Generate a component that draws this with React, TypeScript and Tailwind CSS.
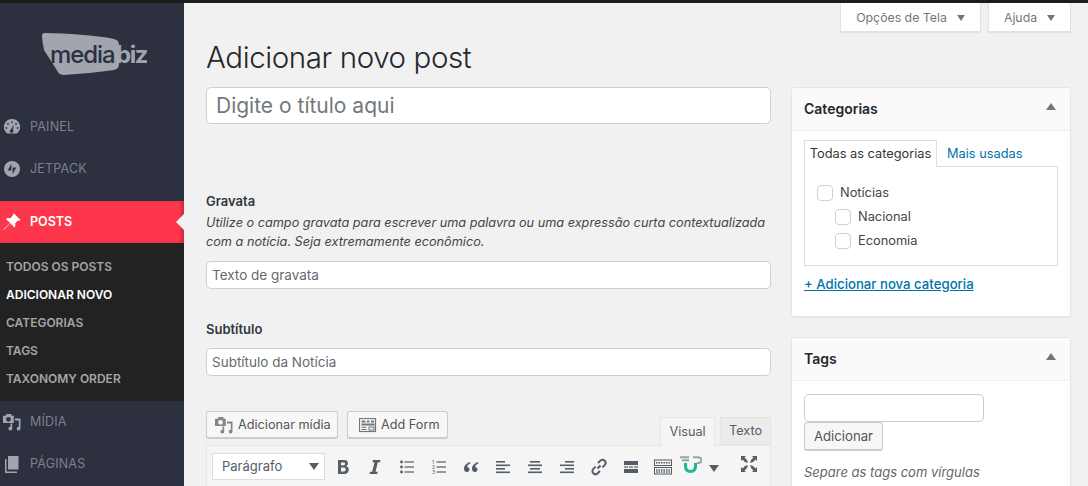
const side = "fill-[#a0a5ae]";

function Caret({ className = "", w = 10, h = 7 }: { className?: string; w?: number; h?: number }) {
  return <svg width={w} height={h} viewBox="0 0 10 7" preserveAspectRatio="none" className={className}><path d="M0 0h10L5 7z" fill="currentColor" /></svg>;
}

function Logo() {
  return (
    <svg width="106" height="42" viewBox="0 0 106 42" className="block">
      <path d="M1 2C1 .5 3 0 5 0c20 .5 50 2 68 6 4 1 5 3 5 6v19c0 3-1 5-5 6-14 2-35 4-50 5-3 0-5-1-6-3L3 17C2 12 1 6 1 2z" fill="#a0a5ae" />
      <text x="9" y="30" fontFamily="Inter, sans-serif" fontSize="24" fontWeight="500" letterSpacing="-1.1" fill="#2c303f">media</text>
      <text x="75" y="30" fontFamily="Inter, sans-serif" fontSize="24" fontWeight="700" letterSpacing="-1.5" fill="#a0a5ae">biz</text>
    </svg>
  );
}

function Gauge() {
  return (
    <svg width="16" height="16" viewBox="0 0 16 16">
      <path fillRule="evenodd" className={side} d="M8 0a8 8 0 0 1 7 12c-.6 1-1.500 2.400-2.500 2.400h-9C2.500 14.400 1.600 13 1 12A8 8 0 0 1 8 0zM8 2.200a.9.9 0 1 0 0 1.800.9.9 0 0 0 0-1.800zM4 4a.9.9 0 1 0 0 1.800A.9.9 0 0 0 4 4zm8 0a.9.9 0 1 0 0 1.800A.9.9 0 0 0 12 4zM2.500 8a.9.9 0 1 0 0 1.800.9.9 0 0 0 0-1.800zm11 0a.9.9 0 1 0 0 1.800.9.9 0 0 0 0-1.800zM9.900 5.500 7 10.500a1.700 1.700 0 1 0 2 .6z" />
    </svg>
  );
}

function Jetpack() {
  return (
    <svg width="16" height="16" viewBox="0 0 16 16">
      <path fillRule="evenodd" className={side} d="M8 0a8 8 0 1 1 0 16A8 8 0 0 1 8 0zM7.400 2.800 3.700 9.600h3.700zM8.600 6.400v6.800l3.700-6.800z" />
    </svg>
  );
}

function Pin() {
  return (
    <svg width="18" height="18" viewBox="0 0 18 18">
      <path fill="#fff" d="M11 .5 17.500 7c-.7.7-1.700.8-2.500.4l-3 3c.6 1.500.4 3-.6 4L7.300 10.300 1 17l-.5-.5 6.600-6.400L3 6c1-1 2.600-1.200 4-.6l3-3c-.3-.6-.2-1.300 1-1.900z" />
    </svg>
  );
}

function Media({ color = "#a0a5ae" }: { color?: string }) {
  return (
    <svg width="18" height="18" viewBox="0 0 18 18">
      <path fillRule="evenodd" fill={color} d="M3.500 1h4.500l.8 1.700h2V10H0V2.700h2.700zM5.500 3.900a2.400 2.400 0 1 0 0 4.800 2.400 2.400 0 0 0 0-4.800z" />
      <path fill={color} d="M12 5.500h5.500v10a1.900 1.900 0 1 1-1.700-1.800V7.500H12zM9.200 10.500v5a1.900 1.900 0 1 1-1.700-1.800v-3.200z" />
    </svg>
  );
}

function Pages() {
  return (
    <svg width="14" height="17" viewBox="0 0 14 17">
      <path fill="#a0a5ae" d="M3 0h10.500v13.500H3zM0 3h1.500v12.500H12V17H0z" />
    </svg>
  );
}

function MenuItem({ icon, label }: { icon: React.ReactNode; label: string }) {
  return (
    <div className="flex h-[42px] items-center">
      <div className="flex w-[30px] shrink-0 justify-center pr-[6px]">{icon}</div>
      <span className="text-[12.500px] tracking-[0.2px] text-[#7c808e]">{label}</span>
    </div>
  );
}

function SubItem({ label, active }: { label: string; active?: boolean }) {
  return (
    <div className={`flex h-7 items-center pl-[6px] text-[12px] font-semibold ${active ? "text-white" : "text-[#a3a5a8]"}`}>
      {label}
    </div>
  );
}

function Sidebar() {
  return (
    <aside className="w-[184px] shrink-0 bg-[#2c303f]">
      <div className="flex h-[103px] items-start pl-[41px] pt-[30px]"><Logo /></div>
      <MenuItem icon={<Gauge />} label="PAINEL" />
      <MenuItem icon={<Jetpack />} label="JETPACK" />
      <div className="h-[11px]" />
      <div className="relative flex h-[42px] items-center bg-[#fd364b] shadow-[inset_-3px_0_3px_rgba(0,0,0,0.18)]">
        <div className="flex w-[30px] shrink-0 justify-center pr-[6px]"><Pin /></div>
        <span className="text-[12.500px] font-semibold text-white">POSTS</span>
        <div className="absolute right-0 top-[13px] h-0 w-0 border-y-[8px] border-r-[8px] border-y-transparent border-r-[#f1f1f1]" />
      </div>
      <div className="h-[158px] bg-[#222222] pt-[10px]">
        <SubItem label="TODOS OS POSTS" />
        <SubItem label="ADICIONAR NOVO" active />
        <SubItem label="CATEGORIAS" />
        <SubItem label="TAGS" />
        <SubItem label="TAXONOMY ORDER" />
      </div>
      <MenuItem icon={<Media />} label="MÍDIA" />
      <MenuItem icon={<Pages />} label="PÁGINAS" />
    </aside>
  );
}

function Field({ text }: { text: string }) {
  return (
    <div className="flex h-7 items-center rounded-[5px] border border-[#cfcfcf] bg-white pl-[5px] text-[13.500px] text-[#666a70]">{text}</div>
  );
}

function Ico({ children, w = 16 }: { children: React.ReactNode; w?: number }) {
  return <svg width={w} height="16" viewBox={`0 0 ${w} 16`} fill="#555d66">{children}</svg>;
}

function Lines({ kind }: { kind: "left" | "center" | "right" }) {
  const rows = {
    left: [[1, 9], [1, 14], [1, 9], [1, 14]],
    center: [[3, 10], [1, 14], [3, 10], [1, 14]],
    right: [[6, 9], [1, 14], [6, 9], [1, 14]],
  }[kind];
  return <Ico>{rows.map(([x, w], i) => <rect key={i} x={x} y={2 + i * 3.500} width={w} height="1.600" />)}</Ico>;
}

function Toolbar() {
  const btn = "mt-[2px] flex h-6 w-8 shrink-0 items-center justify-center";
  return (
    <div className="flex h-[41px] items-start rounded-none border-x border-t border-[#e5e5e5] bg-[#f5f5f5] pl-[5px] pt-[7px]">
      <div className="mr-[2px] flex h-[27px] w-[113px] shrink-0 items-center justify-between border border-[#dddddd] bg-white pl-[9px] pr-[5px] text-[13px] text-[#555d66]">
        Parágrafo <Caret className="text-[#555d66]" />
      </div>
      <div className={btn}><Ico><path d="M3 1h6c2.500 0 4 1.200 4 3.300 0 1.400-.8 2.500-2 2.900 1.700.3 2.800 1.500 2.800 3.300C13.800 13 12 15 9.300 15H3zm3 2.400v2.900h2.400c1.100 0 1.700-.6 1.700-1.500s-.6-1.400-1.700-1.400zm0 5.100v4h2.800c1.200 0 1.900-.8 1.900-2s-.7-2-1.900-2z" /></Ico></div>
      <div className={btn}><Ico><path d="M6 1h7.500l-.5 2.200h-2.200L8.500 12.800h2.200L10.200 15H2.500l.5-2.200h2.200L7.500 3.200H5.500z" /></Ico></div>
      <div className={btn}><Ico><circle cx="2.500" cy="3" r="1.400" /><circle cx="2.500" cy="8" r="1.400" /><circle cx="2.500" cy="13" r="1.400" /><rect x="5.500" y="2.400" width="9.500" height="1.200" /><rect x="5.500" y="7.400" width="9.500" height="1.200" /><rect x="5.500" y="12.400" width="9.500" height="1.200" /></Ico></div>
      <div className={btn}><Ico><rect x="5.500" y="2.400" width="9.500" height="1.200" /><rect x="5.500" y="7.400" width="9.500" height="1.200" /><rect x="5.500" y="12.400" width="9.500" height="1.200" /><text x="1" y="5" fontSize="5" fontFamily="Inter, sans-serif">1</text><text x="1" y="10" fontSize="5" fontFamily="Inter, sans-serif">2</text><text x="1" y="15" fontSize="5" fontFamily="Inter, sans-serif">3</text></Ico></div>
      <div className={btn}><Ico><path d="M6.800 3C3.500 4.400 1 6.500 1 9.800 1 12 2.300 13 3.800 13c1.500 0 2.700-1.100 2.700-2.600 0-1.400-1-2.400-2.400-2.400.2-1.500 1.400-2.700 3.300-3.700zM14.800 3c-3.300 1.400-5.800 3.500-5.800 6.800C9 12 10.300 13 11.800 13c1.500 0 2.700-1.100 2.700-2.600 0-1.400-1-2.400-2.400-2.400.2-1.500 1.400-2.700 3.300-3.700z" /></Ico></div>
      <div className={btn}><Lines kind="left" /></div>
      <div className={btn}><Lines kind="center" /></div>
      <div className={btn}><Lines kind="right" /></div>
      <div className={btn}>
        <svg width="18" height="18" viewBox="0 0 18 18" fill="none" stroke="#555d66" strokeWidth="2"><path d="M7.500 10.500 10.500 7.500M8 5l2-2c1.500-1.500 3.500-1.500 4.700-.3s1.200 3.200-.3 4.700l-2 2M10 13l-2 2c-1.500 1.500-3.500 1.500-4.700.3S2.100 12.100 3.600 10.600l2-2" /></svg>
      </div>
      <div className={btn}><Ico><rect x="1" y="2" width="14" height="4" /><rect x="1" y="7.400" width="4" height="1.200" /><rect x="6" y="7.400" width="4" height="1.200" /><rect x="11" y="7.400" width="4" height="1.200" /><rect x="1" y="10" width="14" height="4" /></Ico></div>
      <div className={btn}>
        <svg width="18" height="16" viewBox="0 0 18 16" fill="none" stroke="#555d66"><rect x=".5" y="1" width="17" height="5.500" /><rect x=".5" y="8.500" width="17" height="6.500" /><path d="M2 3.700h14M2 11h14M2 13h14" strokeDasharray="1.500 1" strokeWidth="1.400" /></svg>
      </div>
      <div className="mt-[3px] flex h-6 w-[24px] shrink-0 items-start justify-center">
        <svg width="22" height="17" viewBox="0 0 22 17" fill="none">
          <path d="M0 1.200h9M2 4.200h7M13 1.200h5c2.500 0 3.500 1.300 3.500 2.800S20.500 7 18.500 7H17" stroke="#9ea1a5" strokeWidth="2" />
          <path d="M5.500 7v3c0 3.500 2 5.500 5 5.500s5-2 5-5.500V7" stroke="#1bb89a" strokeWidth="3" />
        </svg>
      </div>
      <div className="mt-[3px] flex h-6 w-[22px] shrink-0 items-center justify-center"><Caret className="text-[#555d66]" /></div>
      <div className="mt-[2px] flex h-[18px] w-[48px] shrink-0 items-center justify-center">
        <Ico><path d="M0 0h5L3.500 1.500 6 4 7 7 4 6 1.500 3.500 0 5zM16 0v5l-1.500-1.500L12 6 9 7l1-3 2.500-2.500L11 0zM0 16v-5l1.500 1.500L4 10l3-1-1 3-2.500 2.500L5 16zM16 16h-5l1.500-1.500L10 12 9 9l3 1 2.500 2.500L16 11z" /></Ico>
      </div>
    </div>
  );
}

function Editor() {
  return (
    <div className="mt-[35px]">
      <div className="flex h-[34px] items-start">
        <button className="flex h-7 w-[132px] items-center gap-[5px] rounded-[3px] border border-[#cccccc] border-b-[2px] bg-[#f7f7f7] pl-[8px] pt-[1px] text-[12.700px] text-[#555555]">
          <Media color="#82878c" /> Adicionar mídia
        </button>
        <button className="ml-[9px] flex h-7 w-[101px] items-center gap-[4px] rounded-[3px] border border-[#cccccc] border-b-[2px] bg-[#f7f7f7] pl-[11px] pt-[1px] text-[12.700px] text-[#555555]">
          <svg width="18" height="15" viewBox="0 0 18 15" fill="none" stroke="#72777c"><rect x=".5" y=".5" width="16" height="13" strokeWidth="1.200" /><path d="M2.500 3.500h4M8 3.500h2.500M12 3.500h3M2.500 6.500h13" strokeWidth="2" /><path d="M2.500 9.300h5M2.500 11.500h5" /><rect x="10" y="9" width="5" height="3" /></svg>
          Add Form
        </button>
        <div className="ml-auto mt-[6px] flex">
          <div className="z-10 flex h-[29px] w-[55px] items-center justify-center border border-b-0 border-[#e5e5e5] bg-[#f5f5f5] text-[12.700px] text-[#555d66]">Visual</div>
          <div className="ml-[5px] flex h-7 w-[51px] items-center justify-center border border-[#e5e5e5] bg-[#ebebeb] text-[12.700px] text-[#555d66]">Texto</div>
        </div>
      </div>
      <Toolbar />
    </div>
  );
}

function Box({ title, children, h }: { title: string; children: React.ReactNode; h: string }) {
  return (
    <section className={`rounded-[3px] border border-[#e5e5e5] bg-white shadow-[0_1px_1px_rgba(0,0,0,0.04)] ${h}`}>
      <div className="flex h-[43px] items-center justify-between border-b border-[#eeeeee] bg-[#fafafa] pl-[12px] pr-[14px]">
        <h2 className="mb-[2px] text-[14px] font-semibold text-[#23282d]">{title}</h2>
        <Caret className="mb-[5px] rotate-180 text-[#72777c]" />
      </div>
      {children}
    </section>
  );
}

function Check({ label, nested }: { label: string; nested?: boolean }) {
  return (
    <div className={`flex h-6 items-center text-[12.800px] text-[#444444] ${nested ? "pl-[30px]" : "pl-[12px]"}`}>
      <span className="mr-[7px] h-[16px] w-[16px] rounded-[4px] border border-[#d0d0d0] bg-white" />
      {label}
    </div>
  );
}

function Categories() {
  return (
    <Box title="Categorias" h="h-[230px]">
      <div className="px-[12px] pt-[9px]">
        <div className="flex h-[27px]">
          <div className="z-10 flex h-[27px] w-[133px] items-center justify-center border border-b-0 border-[#dddddd] bg-white text-[12.800px] text-[#32373c]">Todas as categorias</div>
          <div className="flex items-center pl-[10px] text-[12.800px] text-[#0073aa]">Mais usadas</div>
        </div>
        <div className="-mt-px h-[100px] w-[254px] border border-[#dddddd] pt-[14px]">
          <Check label="Notícias" />
          <Check label="Nacional" nested />
          <Check label="Economia" nested />
        </div>
        <div className="mt-[9px] text-[13.200px] font-medium text-[#0073aa] underline">+ Adicionar nova categoria</div>
      </div>
    </Box>
  );
}

function Tags() {
  return (
    <Box title="Tags" h="h-[200px]">
      <div className="px-[12px] pt-[13px]">
        <div className="h-7 w-[180px] rounded-[5px] border border-[#cccccc] bg-white" />
        <button className="flex h-[29px] w-[79px] items-center justify-center rounded-[3px] border border-[#cccccc] border-b-[2px] bg-[#f7f7f7] pt-[1px] text-[13.200px] text-[#555555]">Adicionar</button>
        <p className="mt-[12px] text-[13px] italic text-[#666666]">Separe as tags com vírgulas</p>
      </div>
    </Box>
  );
}

export default function App() {
  const top = "flex h-[29px] items-center justify-center gap-[10px] border border-t-0 border-[#e1e1e1] bg-white pt-[3px] text-[12.300px] text-[#72777c] shadow-[0_1px_1px_rgba(0,0,0,0.06)]";
  return (
    <div className="h-[486px] w-[1088px] overflow-hidden bg-[#f1f1f1] font-['Inter',sans-serif]">
      <div className="h-[3px] bg-[#1c1c1c]" />
      <div className="flex h-[483px]">
        <Sidebar />
        <main className="relative min-w-0 flex-1 pl-[22px] pr-[17px]">
          <div className="absolute right-[17px] top-0 flex gap-[7px]">
            <div className={`${top} w-[141px]`}>Opções de Tela <Caret w={8} h={6} className="mb-[2px]" /></div>
            <div className={`${top} w-[83px]`}>Ajuda <Caret w={8} h={6} className="mb-[2px]" /></div>
          </div>
          <div className="flex h-full gap-[20px]">
            <div className="w-[565px] shrink-0">
              <h1 className="h-[84px] pt-[34px] text-[29.500px] font-light leading-[40px] tracking-[-0.4px] text-[#23282d]">Adicionar novo post</h1>
              <div className="flex h-[37px] items-center rounded-[5px] border border-[#cfcfcf] bg-white pl-[9px] text-[21px] text-[#72777c]">Digite o título aqui</div>
              <h3 className="mt-[67px] text-[13px] font-semibold leading-[20px] text-[#32373c]">Gravata</h3>
              <p className="mt-[2px] whitespace-nowrap text-[12.700px] italic leading-[19px] text-[#444444]">Utilize o campo gravata para escrever uma palavra ou uma expressão curta contextualizada<br />com a notícia. Seja extremamente econômico.</p>
              <div className="mt-[10px]"><Field text="Texto de gravata" /></div>
              <h3 className="mt-[30px] text-[13px] font-semibold leading-[20px] text-[#32373c]">Subtítulo</h3>
              <div className="mt-[9px]"><Field text="Subtítulo da Notícia" /></div>
              <Editor />
            </div>
            <div className="w-[280px] shrink-0 pt-[84px]">
              <Categories />
              <div className="h-[20px]" />
              <Tags />
            </div>
          </div>
        </main>
      </div>
    </div>
  );
}
